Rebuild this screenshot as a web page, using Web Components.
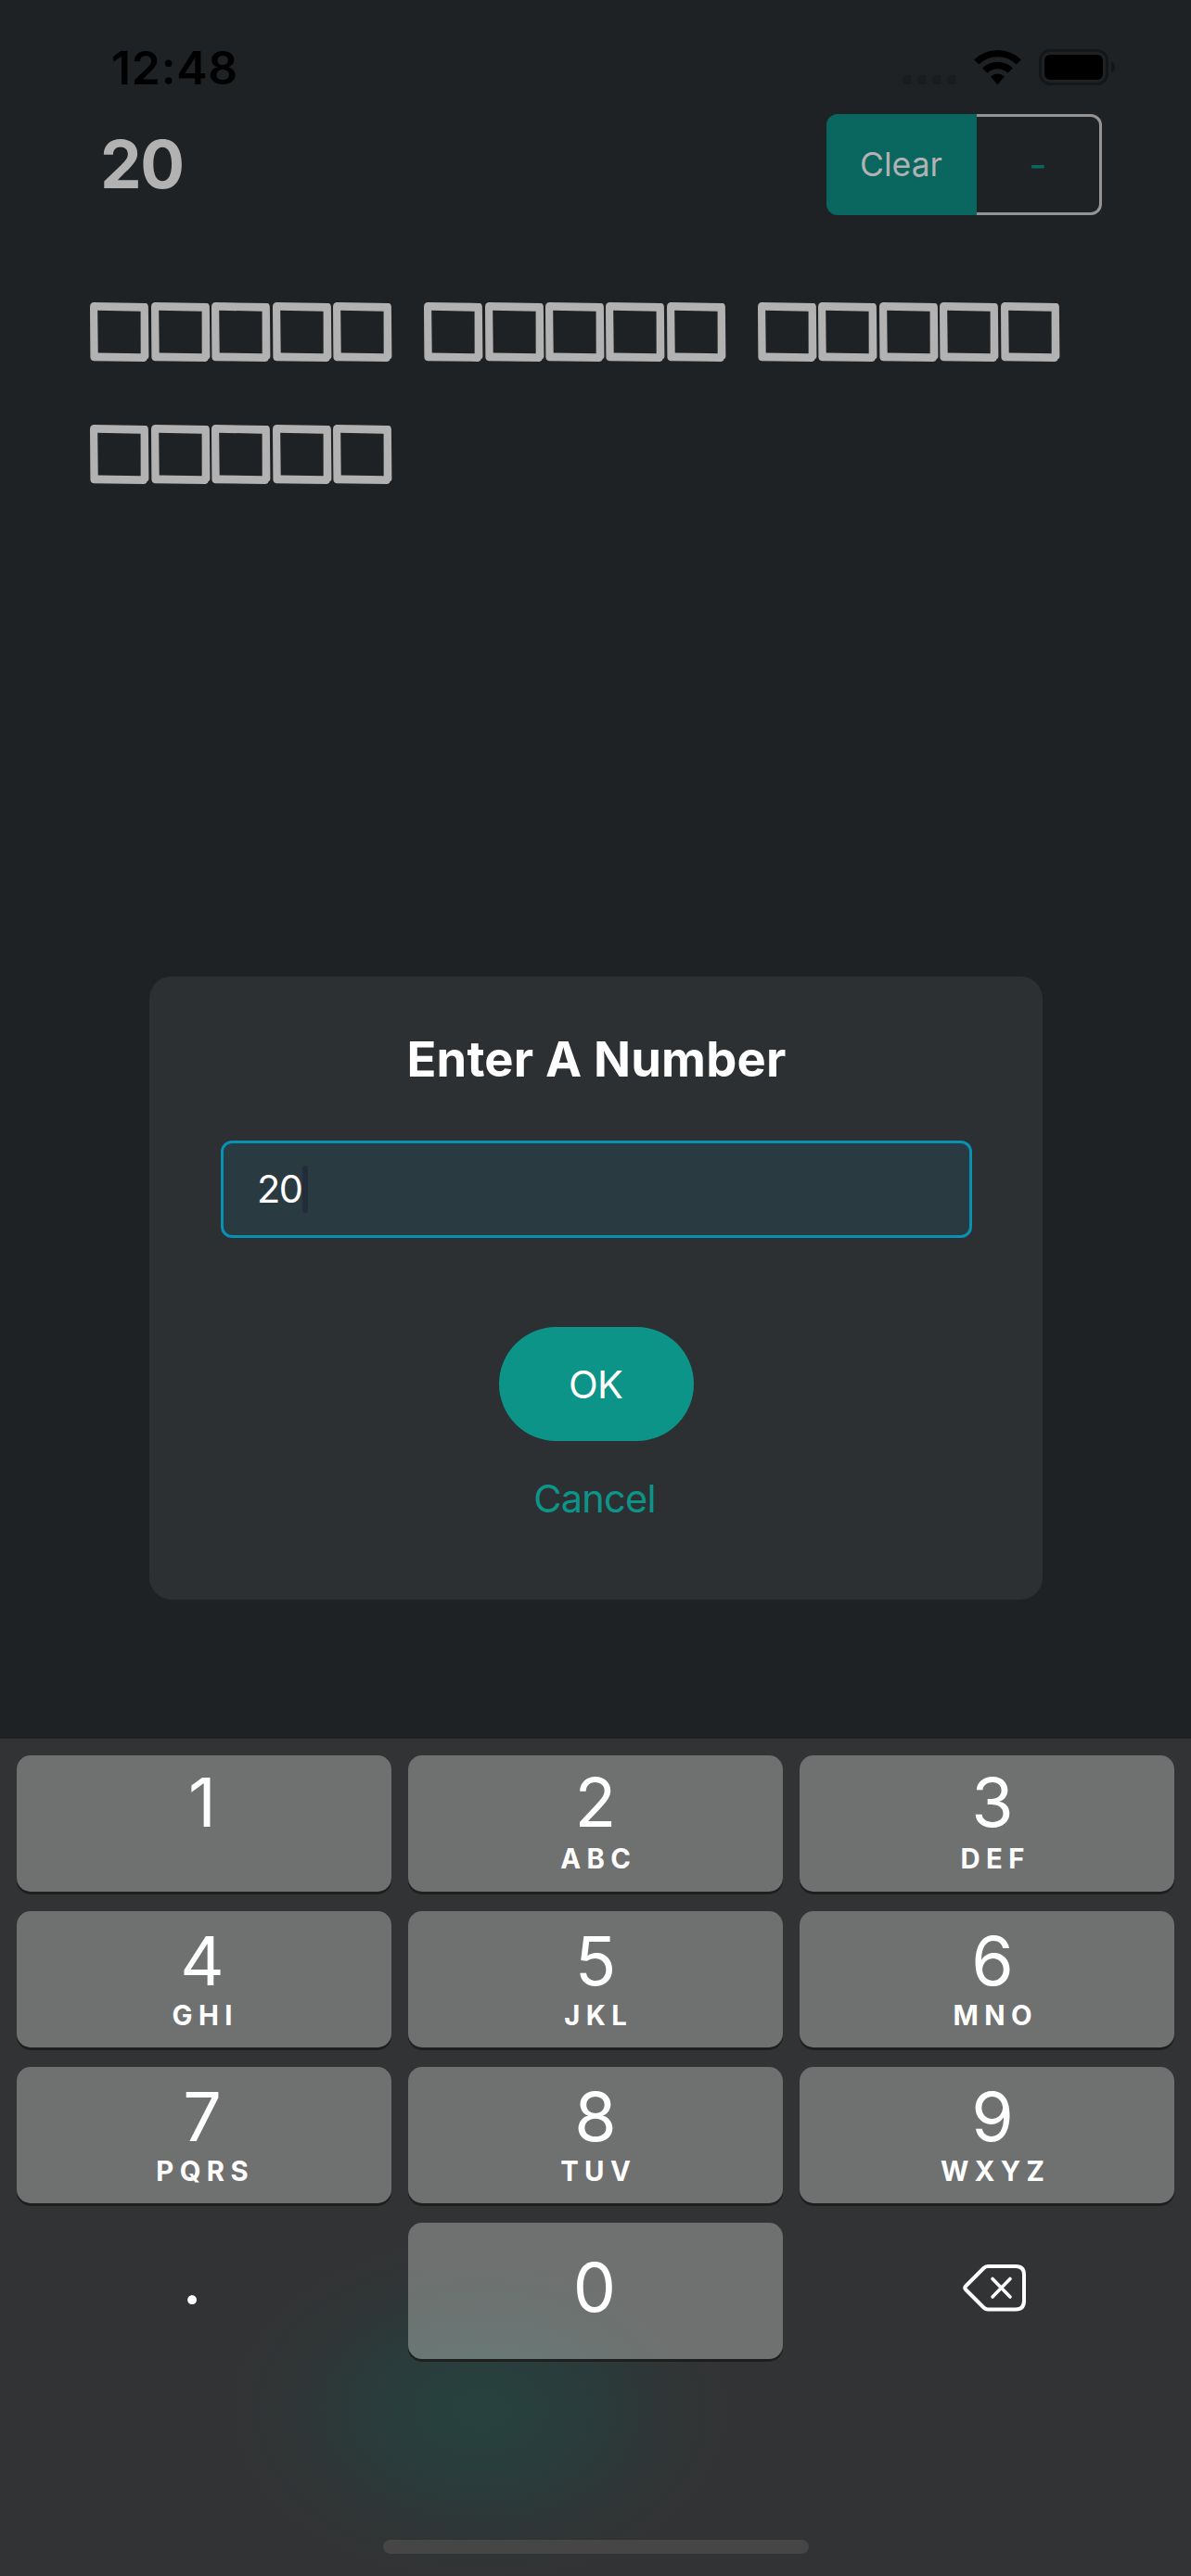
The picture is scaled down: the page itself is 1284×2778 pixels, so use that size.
<!DOCTYPE html>
<html lang="en">
<head>
<meta charset="utf-8">
<title>Enter A Number</title>
<style>
html,body{margin:0;padding:0}
body{width:1284px;height:2778px;overflow:hidden;background:#1f2225;font-family:Inter,"Liberation Sans",sans-serif;font-optical-sizing:none}
</style>
</head>
<body>
<phone-screen>
  <status-bar slot="page" time="12:48"></status-bar>
  <score-header slot="page" value="20">
    <span slot="primary">Clear</span><span slot="secondary">-</span>
  </score-header>
  <tile-words slot="page" words="5,5,5,5"></tile-words>
  <number-dialog slot="modal" value="20">
    <span slot="title">Enter A Number</span>
    <span slot="ok">OK</span>
    <span slot="cancel">Cancel</span>
  </number-dialog>
  <number-pad slot="keyboard"></number-pad>
</phone-screen>
<script>
function element(name, html, setup) {
  customElements.define(name, class extends HTMLElement {
    constructor() {
      super();
      this.attachShadow({ mode: 'open' }).innerHTML = html;
    }
    connectedCallback() { if (setup) setup(this, this.shadowRoot); }
  });
}

element('phone-screen', `
<style>
:host{display:grid;width:1284px;height:2778px;grid-template-rows:1875px 903px;background:#1f2225}
.page,.modal{grid-area:1/1;display:flex;flex-direction:column}
.modal{align-items:center;padding:1053px 0 0 1px}
.keys{grid-area:2/1;display:grid}
</style>
<div class="page"><slot name="page"></slot></div>
<div class="modal"><slot name="modal"></slot></div>
<div class="keys"><slot name="keyboard"></slot></div>`);

element('status-bar', `
<style>
:host{display:flex;height:123px;box-sizing:border-box;padding:53px 82px 0 120px;justify-content:space-between;align-items:flex-start;color:#000}
.time{font-size:50px;font-weight:600;line-height:40px;letter-spacing:.7px}
svg{display:block}
</style>
<span class="time"></span>
<svg width="229" height="39" viewBox="0 0 229 39">
  <g fill="#1b1c1e"><rect y="28" width="10" height="10" rx="3.5"/><rect x="16" y="28" width="10" height="10" rx="3.5"/><rect x="32" y="28" width="10" height="10" rx="3.5"/><rect x="48" y="28" width="10" height="10" rx="3.5"/></g>
  <g transform="translate(77 .8)">
    <g fill="none" stroke="#000" stroke-width="7.4"><path d="M2.7 13.2A32.3 32.3 0 0 1 48.3 13.2"/><path d="M11.8 22.3A19.4 19.4 0 0 1 39.2 22.3"/></g>
    <path d="M18 28.8A10.8 10.8 0 0 1 33 28.8L26.3 36.6Q25.5 37.3 24.7 36.6Z"/>
  </g>
  <rect x="148.500" y="1.5" width="72" height="36" rx="10.500" fill="none" stroke="#141618" stroke-width="3"/>
  <rect x="153" y="6" width="63" height="27" rx="6"/>
  <path d="M225 13.500Q229 15 229 19.500T225 25.500Z" fill="#141618"/>
</svg>`, (el, root) => { root.querySelector('.time').textContent = el.getAttribute('time'); });

element('score-header', `
<style>
:host{display:flex;height:109px;padding:0 96px 0 108px;justify-content:space-between;align-items:center;color:#b2b2b2}
.value{font-size:71px;font-weight:700;line-height:109px;letter-spacing:-1.5px}
.group{display:flex;height:109px;font-size:35.5px;line-height:109px;text-align:center}
.a{width:162px;box-sizing:border-box;padding-right:1px;background:#0a675f;border-radius:12px 0 0 12px}
.b{width:135px;box-sizing:border-box;border:3px solid #949494;border-left:0;border-radius:0 12px 12px 0;color:#0a675f;font-size:42px;line-height:103px}
</style>
<span class="value"></span>
<div class="group"><div class="a"><slot name="primary"></slot></div><div class="b"><slot name="secondary"></slot></div></div>`,
(el, root) => { root.querySelector('.value').textContent = el.getAttribute('value'); });

element('tile-words', `
<style>
:host{display:flex;flex-wrap:wrap;column-gap:32.7px;row-gap:68.7px;padding:93.500px 90px 0 97.200px}
.word{display:flex}
svg{display:block;width:65.45px;height:64px;fill:#b2b2b2}
</style>`, (el, root) => {
  const tile = '<svg viewBox="0 0 65.45 64"><path fill-rule="evenodd" d="M0 5Q0 .500 4 .1L60 .9Q62.800 1.200 62.900 5L63.400 58.500Q63.400 60.800 61.700 61Q61.400 63.600 58.500 63.900L4 63.200Q.6 63 .4 59ZM8.200 8.700L8.700 54.600L54.700 55.200L54.600 9.700Z"/></svg>';
  el.getAttribute('words').split(',').forEach(n => {
    const w = document.createElement('div');
    w.className = 'word';
    w.innerHTML = tile.repeat(+n);
    root.append(w);
  });
});

element('number-dialog', `
<style>
:host{display:flex;flex-direction:column;align-items:center;box-sizing:border-box;width:963px;height:672px;padding:59px 0 0 1px;border-radius:24px;background:#2d3033;color:#fff;font-size:41.5px}
.title{font-size:52.5px;font-weight:700;line-height:60px;letter-spacing:.2px}
.field{display:flex;align-items:center;box-sizing:border-box;width:810px;height:105px;margin-top:58px;padding-left:36px;border:3px solid #0891b2;border-radius:12px;background:#2a3a41}
.value{letter-spacing:-1.500px;line-height:51px;padding-bottom:1px}
.caret{width:6px;height:51px;border-radius:3px;background:#222c3b}
.ok{width:210px;height:123px;box-sizing:border-box;padding-right:2px;margin-top:96px;border-radius:62px;background:#0d9488;line-height:124px;text-align:center;letter-spacing:-.8px}
.cancel{margin-top:32px;line-height:60px;color:#0d9488;letter-spacing:-.8px;margin-right:4px}
</style>
<div class="title"><slot name="title"></slot></div>
<div class="field"><span class="value"></span><span class="caret"></span></div>
<div class="ok"><slot name="ok"></slot></div>
<div class="cancel"><slot name="cancel"></slot></div>`,
(el, root) => { root.querySelector('.value').textContent = el.getAttribute('value'); });

element('pad-key', `
<style>
:host{display:flex;flex-direction:column;align-items:center;box-sizing:border-box;height:147px;padding-top:13.5px;border-radius:15px;background:rgba(254,255,249,.3);box-shadow:0 3px 0 #1e2020;color:#fff;text-align:center}
:host([plain]){background:none;box-shadow:none}
:host([top]){padding-top:10.5px}
:host([solo]){padding-top:29.5px}
:host([plain][solo]){padding-top:21.5px}
.d{font-size:73.5px;line-height:80px;transform:translateX(var(--shift,0))}
.l{margin-top:4px;font-size:29.3px;font-weight:700;line-height:30px;letter-spacing:6.4px;margin-right:-6.4px;transform:translateX(var(--shift,0))}
:host([top]) .l{margin-top:6px}
</style>
<span class="d"><slot></slot></span><span class="l"></span>`,
(el, root) => { root.querySelector('.l').textContent = el.getAttribute('letters') || ''; });

element('number-pad', `
<style>
:host{display:flex;flex-direction:column;align-items:center;justify-content:space-between;box-sizing:border-box;padding:18px 18px 24px;
background:radial-gradient(ellipse 270px 185px at 518px 724px,#28413e 0,#28403d 20%,#2b3a3a 50%,#303536 78%,rgba(50,51,53,0) 100%),#323335}
.grid{display:grid;grid-template-columns:repeat(3,404px);gap:21px 18px}
.c1{--shift:-2px}.c3{--shift:6px}.z{--shift:-1px}
.dot{--shift:-13px}
.erase{display:flex;justify-content:center;align-items:center;height:147px;padding:0 0 7px 16px;box-sizing:border-box}
.home{width:459px;height:15px;border-radius:8px;background:#464646}
</style>
<div class="grid">
<pad-key class="c1" top>1</pad-key><pad-key top letters="ABC">2</pad-key><pad-key class="c3" top letters="DEF">3</pad-key>
<pad-key class="c1" letters="GHI">4</pad-key><pad-key letters="JKL">5</pad-key><pad-key class="c3" letters="MNO">6</pad-key>
<pad-key class="c1" letters="PQRS">7</pad-key><pad-key letters="TUV">8</pad-key><pad-key class="c3" letters="WXYZ">9</pad-key>
<pad-key class="dot" plain solo>.</pad-key><pad-key class="z" solo>0</pad-key>
<div class="erase"><svg width="68" height="51" viewBox="0 0 68 51" fill="none" stroke="#fff" stroke-linecap="round" stroke-linejoin="round"><path stroke-width="4" d="M27 2H57Q66 2 66 11V39Q66 48.500 57 48.500H27Q24.500 48.500 22.500 46.500L3 27Q1.500 25.300 3 23.500L22.500 4Q24.500 2 27 2Z"/><path stroke-width="3.600" d="M32 15.500L51 35M51 15.500L32 35"/></svg></div>
</div>
<div class="home"></div>`);
</script>
</body>
</html>
